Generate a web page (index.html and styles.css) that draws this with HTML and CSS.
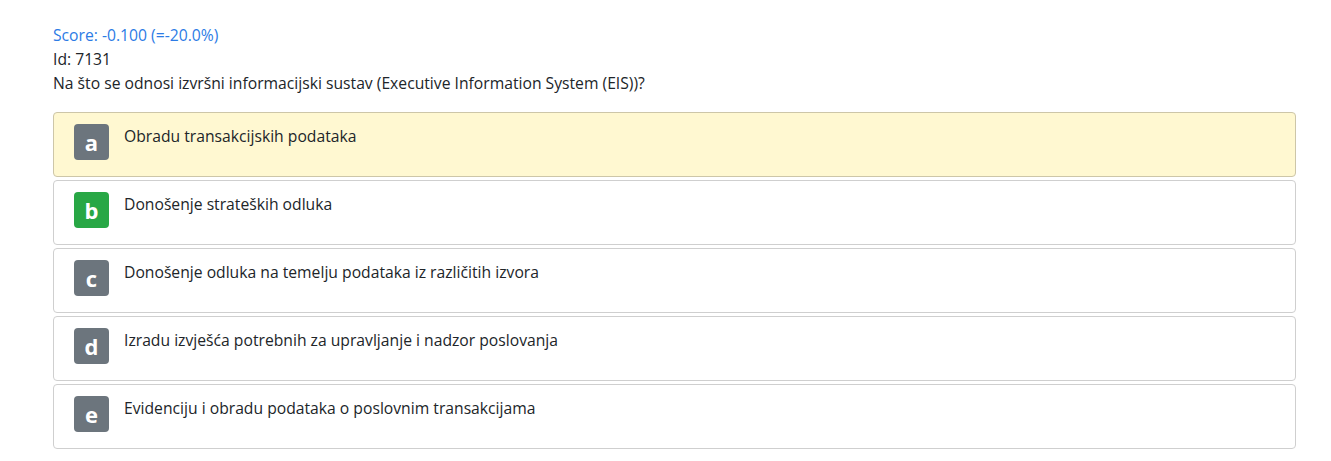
FILE: index.html
```html
<!DOCTYPE html>
<html>
<head>
<meta charset="utf-8">
<link rel="stylesheet" href="styles.css">
</head>
<body>
<div class="page">
  <div class="head">
    <div class="score">Score: -0.100 (=-20.0%)</div>
    <div class="line">Id: 7131</div>
    <div class="line">Na što se odnosi izvršni informacijski sustav (Executive Information System (EIS))?</div>
  </div>
  <div class="answers">
    <div class="answer selected"><span class="badge">a</span><span class="text">Obradu transakcijskih podataka</span></div>
    <div class="answer"><span class="badge correct">b</span><span class="text">Donošenje strateških odluka</span></div>
    <div class="answer"><span class="badge">c</span><span class="text">Donošenje odluka na temelju podataka iz različitih izvora</span></div>
    <div class="answer"><span class="badge">d</span><span class="text">Izradu izvješća potrebnih za upravljanje i nadzor poslovanja</span></div>
    <div class="answer"><span class="badge">e</span><span class="text">Evidenciju i obradu podataka o poslovnim transakcijama</span></div>
  </div>
</div>
</body>
</html>
```
FILE: styles.css
```css
* { box-sizing: border-box; }
body {
  margin: 0;
  background: #fff;
  font-family: "Open Sans", "Noto Sans", sans-serif;
  font-size: 15.7px;
  color: #212529;
}
.page {
  padding: 23px 35px 0 53px;
}
.head {
  line-height: 24px;
  margin-bottom: 17px;
}
.score { color: #2c7be5; }
.answers {
  display: flex;
  flex-direction: column;
  gap: 3px;
}
.answer {
  display: flex;
  align-items: flex-start;
  height: 65px;
  border: 1px solid #cfcfcf;
  border-radius: 4px;
  padding: 11px 20px 0;
  background: #fff;
}
.answer.selected {
  background: #fff8d1;
  border-color: #cdc6a8;
}
.badge {
  flex: none;
  width: 35px;
  height: 36px;
  border-radius: 4px;
  background: #6c757d;
  color: #fff;
  font-weight: 700;
  font-size: 22px;
  display: flex;
  align-items: center;
  justify-content: center;
  line-height: 1;
  padding-bottom: 1px;
}
.badge.correct { background: #28a745; }
.text {
  margin-left: 15px;
  line-height: 22px;
  padding-top: 1px;
}
```
